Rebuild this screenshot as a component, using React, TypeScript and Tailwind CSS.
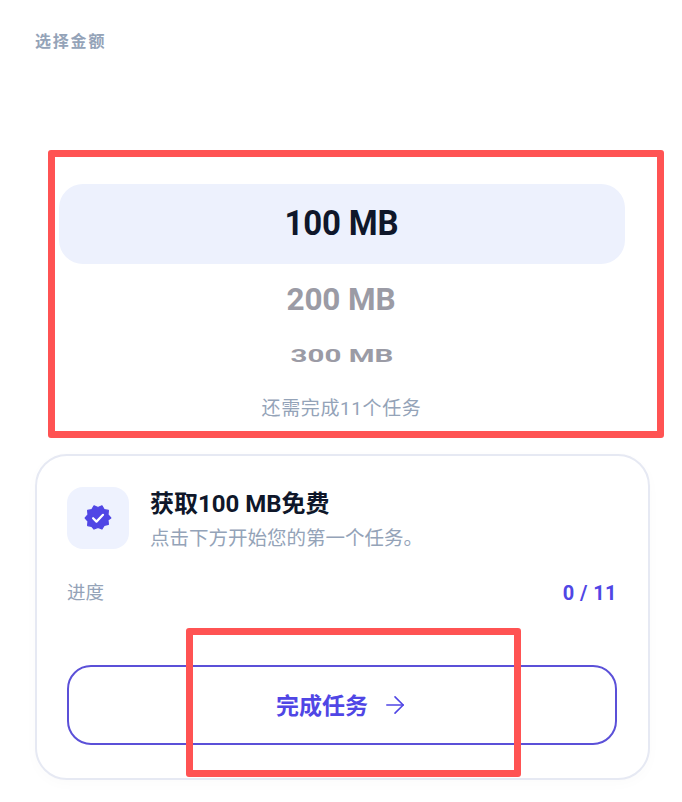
import React from 'react';
import { ArrowRight } from 'lucide-react';

const sans = 'font-["Roboto","Noto_Sans_CJK_SC",sans-serif]';

const App: React.FC = () => {
  return (
    <div className={`relative w-[682px] h-[802px] overflow-hidden bg-white ${sans}`}>
      <div className="px-[35px] pt-[32px] h-[184px]">
        <div className="text-[16px] leading-[20px] font-bold tracking-[1.8px] text-[#94a3b8]">选择金额</div>
      </div>

      {/* Amount wheel */}
      <div className="flex flex-col items-center">
        <div className="ml-[1px] w-[566px] h-[80px] rounded-[24px] bg-[#edf1fd] flex items-center justify-center pb-[2px]">
          <span className="text-[33px] font-bold tracking-[-0.2px] text-[#0f172a] scale-y-[1.08]">100 MB</span>
        </div>
        <div className="h-[72px] flex items-center text-[31.5px] font-bold tracking-[-0.1px] text-[#9b9ba5]">200 MB</div>
        <div className="h-[40px] flex items-center ml-[2px] text-[29.5px] font-bold text-[#9b9ba5] scale-y-[0.62]">300 MB</div>
        <div className="mt-[20px] ml-[1px] text-[19px] leading-[26px] tracking-[0.6px] text-[#94a3b8]">还需完成11个任务</div>
      </div>

      {/* Task card */}
      <div className="mx-[35px] mt-[32px] w-[615px] h-[326px] rounded-[32px] border-2 border-[#e6e9f3] bg-white px-[30px] pt-[31px] shadow-[0_4px_14px_rgba(15,23,42,0.02)]">
        <div className="flex gap-[22px]">
          <div className="w-[62px] h-[62px] rounded-[16px] bg-[#eef2fe] flex items-center justify-center">
            <svg width="28" height="28" viewBox="0 0 24 24" strokeLinecap="round" strokeLinejoin="round">
              <path
                d="M23 12l-2.44-2.79.34-3.69-3.61-.82-1.89-3.2L12 2.96 8.6 1.5 6.71 4.69 3.1 5.5l.34 3.7L1 12l2.44 2.79-.34 3.7 3.61.82L8.6 21.5l3.4-1.47 3.4 1.46 1.89-3.19 3.61-.82-.34-3.69L23 12z"
                fill="#5046e5"
                stroke="#5046e5"
                strokeWidth="1"
              />
              <path d="m7.8 12.2 2.9 2.9 5.6-5.8" fill="none" stroke="#ffffff" strokeWidth="1.9" />
            </svg>
          </div>
          <div className="-ml-[1px] pt-[2px]">
            <div className="text-[24px] leading-[30px] font-bold text-[#0f172a]">获取100 MB免费</div>
            <div className="text-[19.5px] leading-[26px] mt-[7px] text-[#94a3b8]">点击下方开始您的第一个任务。</div>
          </div>
        </div>

        <div className="mt-[28px] flex items-center justify-between h-[26px]">
          <span className="text-[18.5px] text-[#94a3b8] pt-[1px]">进度</span>
          <span className="text-[20px] font-bold tracking-[0.4px] text-[#5046e5] pr-[1px]">0 / 11</span>
        </div>

        <button className="mt-[59px] w-[550px] h-[80px] rounded-[24px] border-2 border-[#5b50d8] bg-white flex items-center justify-center gap-[13px] pl-[1px] text-[#5046e5]">
          <span className="text-[23px] font-bold pt-[4px]">完成任务</span>
          <ArrowRight size={28} strokeWidth={1.4} />
        </button>
      </div>

      {/* Annotation boxes */}
      <div className="absolute left-[48px] top-[150px] w-[616px] h-[288px] border-[7px] border-[#ff5353] rounded-[3px]" />
      <div className="absolute left-[186px] top-[628px] w-[335px] h-[149px] border-[7px] border-[#ff5353] rounded-[3px]" />
    </div>
  );
};

export default App;
